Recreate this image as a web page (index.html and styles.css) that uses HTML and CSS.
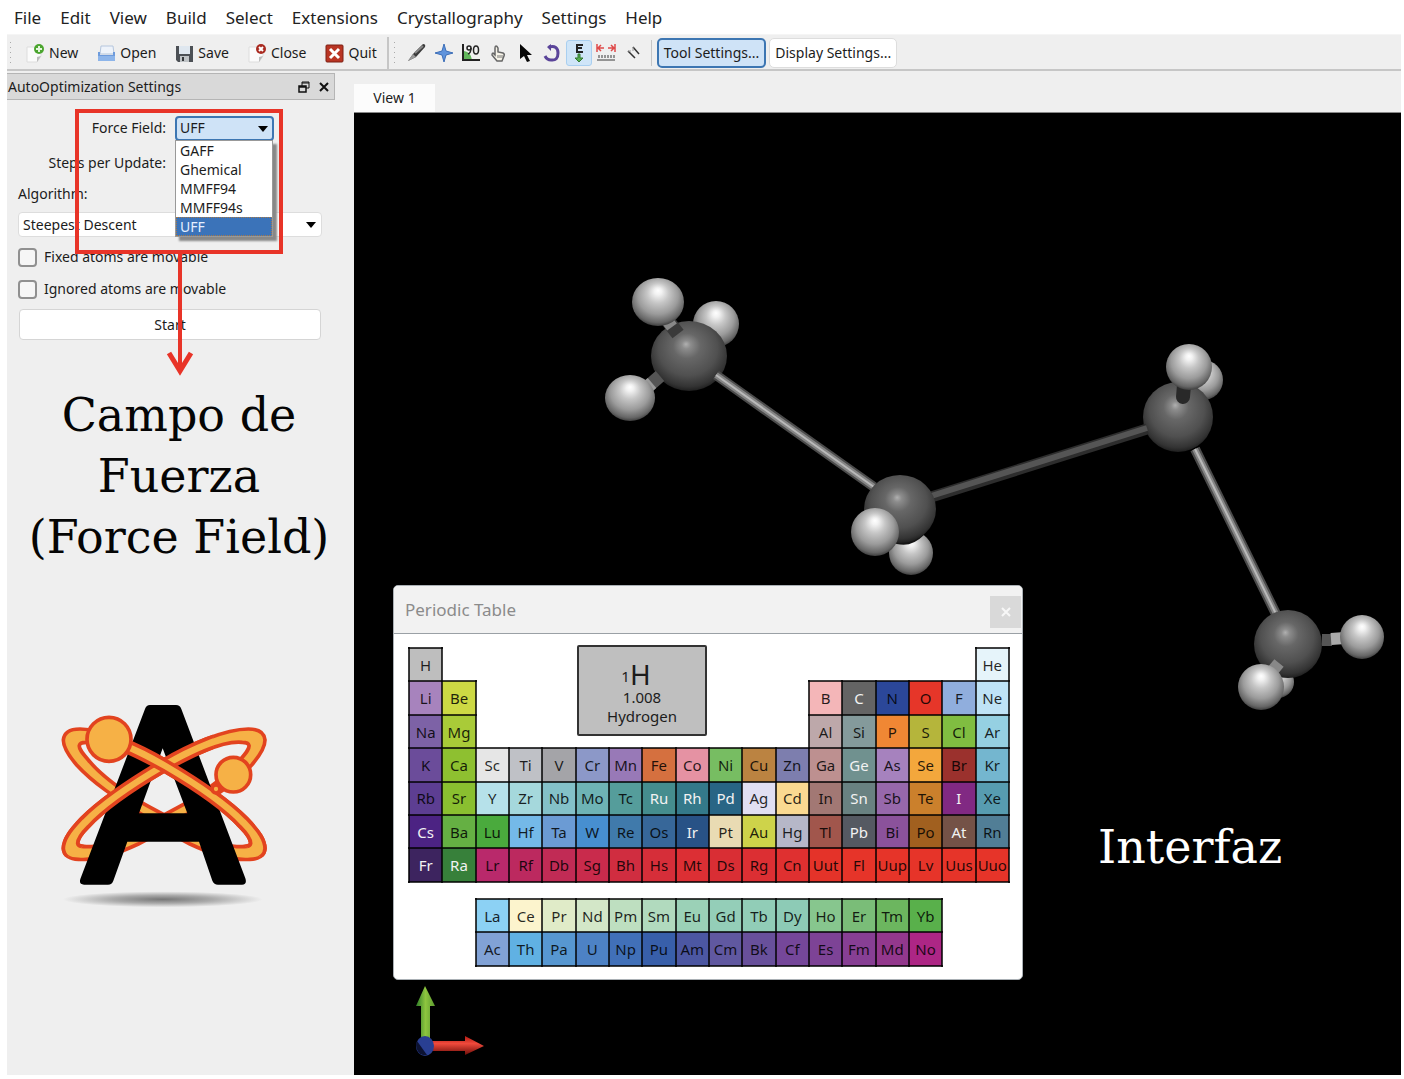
FILE: index.html
```html
<!DOCTYPE html>
<html lang="en">
<head>
<meta charset="utf-8">
<title>Avogadro</title>
<link rel="stylesheet" href="styles.css">
</head>
<body>
<div class="app">
  <nav class="menubar">
    <a href="#">File</a><a href="#">Edit</a><a href="#">View</a><a href="#">Build</a><a href="#">Select</a><a href="#">Extensions</a><a href="#">Crystallography</a><a href="#">Settings</a><a href="#">Help</a>
  </nav>

  <div class="toolbar">
    <span class="grip"></span>
    <div class="files">
      <button class="tool"><svg width="19" height="19" viewBox="0 0 19 19"><path d="M1 3h14v9l-4 6H1z" fill="#fbfbfb" stroke="#ddd"/><path d="M15 12l-4 6v-5z" fill="#bbb"/><circle cx="13" cy="5" r="5" fill="#4ba52f"/><path d="M13 2v6M10 5h6" stroke="#e4f6dc" stroke-width="2"/></svg>New</button>
      <button class="tool"><svg width="19" height="19" viewBox="0 0 19 19"><path d="M4 2h12l1 8H3z" fill="#eef3fa" stroke="#b5c6dd"/><path d="M1 8h2v3h13V8h2v8q0 1-1 1H2q-1 0-1-1z" fill="#6d9bdc"/><path d="M1 12h17v4q0 1-1 1H2q-1 0-1-1z" fill="#8db5ea"/></svg>Open</button>
      <button class="tool"><svg width="19" height="19" viewBox="0 0 19 19"><path d="M1 2h17v16H3l-2-2z" fill="#4c5055"/><path d="M4 2h11v8H4z" fill="#dfe7ef"/><path d="M5 12h9v6H5z" fill="#bfc3c6"/><path d="M7 13h2v4H7z" fill="#35383b"/></svg>Save</button>
      <button class="tool"><svg width="19" height="19" viewBox="0 0 19 19"><path d="M1 3h14v9l-4 6H1z" fill="#fbfbfb" stroke="#ddd"/><path d="M15 12l-4 6v-5z" fill="#bbb"/><circle cx="13" cy="5" r="5" fill="#a92a20"/><path d="M11 3l4 4m0-4l-4 4" stroke="#fff" stroke-width="2"/></svg>Close</button>
      <button class="tool"><svg width="19" height="19" viewBox="0 0 19 19"><rect x="1" y="1" width="17" height="17" rx="1" fill="#b93523" stroke="#7d2115"/><path d="M5 5l9 9m0-9l-9 9" stroke="#fff" stroke-width="3"/></svg>Quit</button>
    </div>
    <span class="rule"></span>
    <span class="grip"></span>
    <div class="modes">
      <button class="mode" aria-label="Draw"><svg width="20" height="20" viewBox="0 0 20 20"><path d="M1 18l5-7L16 1q3 0 2 3L9 14z" fill="#3b3b3b"/><path d="M1 18l5-7 3 3z" fill="#999"/><path d="M8 10l8-7" stroke="#888" stroke-width="2"/></svg></button>
      <button class="mode" aria-label="Navigate"><svg width="20" height="20" viewBox="0 0 20 20"><path d="M10 1l2 7 7 2-7 2-2 7-2-7-7-2 7-2z" fill="#5f93dc" stroke="#3c6eb8"/></svg></button>
      <button class="mode" aria-label="Bond centric"><svg width="20" height="20" viewBox="0 0 20 20"><path d="M3 17V8q7 1 8 9z" fill="#62b75b"/><path d="M2 1v16h17" fill="none" stroke="#222" stroke-width="2"/><g fill="none" stroke="#222" stroke-width="1.5"><circle cx="8" cy="5" r="2"/><path d="M10 5q0 5-3 6"/><ellipse cx="15" cy="7" rx="2.500" ry="4"/></g></svg></button>
      <button class="mode" aria-label="Manipulate"><svg width="20" height="20" viewBox="0 0 20 20"><path d="M7 12V5q0-2 1-2t2 2v4l5 1q2 1 1 3l-2 5H9l-5-6q0-2 1-2z" fill="#f6f3e8" stroke="#666" stroke-width="1.500"/><path d="M10 12v3m2-3v3m2-3v3" stroke="#777"/></svg></button>
      <button class="mode" aria-label="Select"><svg width="20" height="20" viewBox="0 0 20 20"><path d="M5 1v15l4-3 3 6 3-1-3-6h5z" fill="#050505"/></svg></button>
      <button class="mode" aria-label="Auto rotate"><svg width="20" height="20" viewBox="0 0 20 20"><path d="M7 4q9-2 9 6t-7 7q-4 0-6-4" fill="none" stroke="#5a4499" stroke-width="3"/><path d="M9 1v7L5 4z" fill="#5a4499"/></svg></button>
      <button class="mode mode-on" aria-label="Auto optimize"><svg width="20" height="20" viewBox="0 0 20 20"><path d="M14 2H8v7h6M8 5h5" fill="none" stroke="#222" stroke-width="2"/><path d="M9 11h2v4h3l-4 4-4-4h3z" fill="#55ad50" stroke="#32782e"/></svg></button>
      <button class="mode" aria-label="Measure"><svg width="20" height="20" viewBox="0 0 20 20"><path d="M1 1v8M19 1v8M2 5h6m4 0h6M5 2L2 5l3 3M15 2l3 3-3 3" fill="none" stroke="#df4a4a" stroke-width="1.500"/><path d="M1 17h18M3 12v3m3-3v3m3-3v3m3-3v3m3-3v3m3-3v3" stroke="#777" stroke-width="1.500"/></svg></button>
      <button class="mode" aria-label="Align"><svg width="20" height="20" viewBox="0 0 20 20"><path d="M5 8l7 7M10 4l6 7" stroke="#333" stroke-width="1.500"/><path d="M5 8h3M10 4v4" stroke="#999"/></svg></button>
    </div>
    <span class="rule rule-soft"></span>
    <button class="push push-on">Tool Settings...</button>
    <button class="push">Display Settings...</button>
  </div>

  <main class="work">
    <aside class="dock">
      <header class="dock-head">
        <span>AutoOptimization Settings</span>
        <button aria-label="Float"><svg width="12" height="12" viewBox="0 0 12 12" fill="none" stroke="#111"><path d="M4 5V1h7v6H8M4 2h7"/><path d="M1 5h7v6H1zM1 6h7" stroke-width="1.500"/></svg></button>
        <button aria-label="Close panel"><svg width="12" height="12" viewBox="0 0 12 12"><path d="M2 2l8 8m0-8l-8 8" stroke="#111" stroke-width="2"/></svg></button>
      </header>

      <form class="form">
        <div class="row row-pair">
          <label for="field">Force Field:</label>
          <div class="combo combo-short">
            <select id="field" class="select-on"><option>UFF</option></select>
            <svg class="caret" width="10" height="6" viewBox="0 0 10 6"><path d="M0 0h10L5 6z"/></svg>
            <ul class="popup">
              <li>GAFF</li><li>Ghemical</li><li>MMFF94</li><li>MMFF94s</li><li class="picked">UFF</li>
            </ul>
          </div>
        </div>
        <div class="row row-pair"><label for="steps">Steps per Update:</label><input id="steps" class="steps" type="text"></div>
        <label class="algo" for="algo">Algorithm:</label>
        <div class="combo">
          <select id="algo"><option>Steepest Descent</option></select>
          <svg class="caret" width="10" height="6" viewBox="0 0 10 6"><path d="M0 0h10L5 6z"/></svg>
        </div>
        <label class="row check"><input type="checkbox">Fixed atoms are movable</label>
        <label class="row check"><input type="checkbox">Ignored atoms are movable</label>
        <button class="start" type="button">Start</button>
      </form>

      <p class="caption">Campo de<br>Fuerza<br>(Force Field)</p>

      <svg class="logo" width="250" height="230" viewBox="0 0 750 690">
        <defs>
          <radialGradient id="floor"><stop offset="0" stop-color="#777"/><stop offset=".5" stop-color="#aaa"/><stop offset="1" stop-color="#efefef"/></radialGradient>
          <path id="orbit" fill-rule="evenodd" d="M120 117C190 117 300 165 380 213C460 260 560 325 620 385C660 427 674 450 675 475C674 497 655 508 630 508C580 512 520 495 450 462C390 432 340 395 290 363C230 325 160 280 110 225C80 190 70 165 70 150C72 128 90 117 120 117ZM138 157C200 150 300 203 370 242C440 283 540 345 600 410C620 430 632 450 632 460C630 472 610 470 590 470C540 465 470 425 420 400C380 378 340 358 305 338C260 310 190 265 145 210C125 187 116 175 118 166C120 158 128 157 138 157Z"/>
          <clipPath id="front"><path d="M225 100H750V520L660 500L225 190Z"/></clipPath>
        </defs>
        <ellipse cx="368" cy="628" rx="300" ry="24" fill="url(#floor)"/>
        <g fill="#f6b146" stroke="#e2431f" stroke-width="11">
          <use href="#orbit" transform="matrix(-1 0 0 1 745 0)"/>
          <use href="#orbit"/>
        </g>
        <path fill="#000" fill-rule="evenodd" d="M330 45H408Q420 45 424 57L616 565Q622 583 606 584H534Q522 584 517 572L477 455H262L220 572Q216 584 204 584H132Q116 583 121 567L315 57Q319 45 330 45ZM368 175L297 370H442Z"/>
        <g fill="#f6b146" stroke="#e2431f" stroke-width="11">
          <g transform="matrix(-1 0 0 1 745 0)"><use href="#orbit" clip-path="url(#front)"/></g>
          <use href="#orbit" clip-path="url(#front)"/>
          <circle cx="528" cy="297" r="12"/>
          <circle cx="207" cy="148" r="66"/>
          <circle cx="580" cy="254" r="52"/>
        </g>
      </svg>

      <svg class="callout" width="212" height="272" viewBox="0 0 212 272" fill="none" stroke="#e83428" stroke-width="4">
        <path d="M4 4H208V145H4zM107 145V264"/><path d="M96 246L107 264L118 246" stroke-width="5"/>
      </svg>
    </aside>

    <section class="stage">
      <div class="tabs"><button class="tab">View 1</button></div>
      <div class="view">
        <svg class="scene" viewBox="354 113 1047 962">
          <defs>
            <radialGradient id="h" cx=".5" cy=".42" r=".6" fx=".5" fy=".26"><stop offset="0" stop-color="#fff"/><stop offset=".12" stop-color="#f2f2f2"/><stop offset=".35" stop-color="#c6c6c6"/><stop offset=".65" stop-color="#9b9b9b"/><stop offset=".88" stop-color="#666"/><stop offset="1" stop-color="#333"/></radialGradient>
            <radialGradient id="c" cx=".5" cy=".42" r=".6" fx=".46" fy=".33"><stop offset="0" stop-color="#b0b0b0"/><stop offset=".1" stop-color="#8c8c8c"/><stop offset=".3" stop-color="#676767"/><stop offset=".65" stop-color="#505050"/><stop offset=".88" stop-color="#333"/><stop offset="1" stop-color="#181818"/></radialGradient>
            <linearGradient id="red" x1="0" y1="0" x2="0" y2="1"><stop offset="0" stop-color="#b01912"/><stop offset=".4" stop-color="#f04a3c"/><stop offset="1" stop-color="#6d0d08"/></linearGradient>
            <linearGradient id="green"><stop offset="0" stop-color="#2d7c28"/><stop offset=".5" stop-color="#8ec63f"/><stop offset="1" stop-color="#5c9a2f"/></linearGradient>
          </defs>
          <circle cx="716" cy="324" r="23" fill="url(#h)"/>
          <ellipse cx="689" cy="356" rx="38" ry="35" fill="url(#c)"/>
          <path d="M668 321L678 334" stroke="#3a3a3a" stroke-width="14"/><path d="M666 319L672 327" stroke="#888" stroke-width="12"/>
          <path d="M644 390L660 376" stroke="#555" stroke-width="13"/><path d="M644 390L652 383" stroke="#999" stroke-width="13"/>
          <ellipse cx="658" cy="302" rx="26" ry="24" fill="url(#h)"/><ellipse cx="630" cy="398" rx="25" ry="23" fill="url(#h)"/>
          <circle cx="1203" cy="380" r="20" fill="url(#h)"/><circle cx="1178" cy="417" r="35" fill="url(#c)"/>
          <path d="M1184 385L1183 397" stroke="#292929" stroke-width="14" stroke-linecap="round"/><circle cx="1189" cy="367" r="23" fill="url(#h)"/>
          <path d="M716 375L874 487M1195 449L1276 614" stroke="#4b4b4b" stroke-width="10"/><path d="M928 498L1147 429" stroke="#2d2d2d" stroke-width="11"/>
          <path d="M716 375L874 487M1195 449L1276 614" stroke="#858585" stroke-width="6"/><path d="M928 497L1147 428" stroke="#555" stroke-width="6"/>
          <path d="M716 375L874 487M1195 449L1276 614" stroke="#b9b9b9" stroke-width="2"/>
          <circle cx="911" cy="553" r="22" fill="url(#h)"/><path d="M890 541Q908 551 924 535L920 520H890z" fill="#151515"/>
          <ellipse cx="900" cy="509" rx="36" ry="34" fill="url(#c)"/><circle cx="875" cy="532" r="24" fill="url(#h)"/>
          <circle cx="1278" cy="682" r="16" fill="url(#h)"/><circle cx="1288" cy="644" r="34" fill="url(#c)"/>
          <path d="M1322 640H1332" stroke="#555" stroke-width="12"/><path d="M1331 639L1345 638" stroke="#aaa" stroke-width="12"/>
          <path d="M1279 663L1270 674" stroke="#888" stroke-width="12"/>
          <circle cx="1362" cy="637" r="22" fill="url(#h)"/><circle cx="1261" cy="687" r="23" fill="url(#h)"/>
          <path d="M421 1040V1006H416L425 986L435 1006H430V1040z" fill="url(#green)"/>
          <path d="M432 1041H465V1036L484 1046L465 1055V1051H432z" fill="url(#red)"/>
          <ellipse cx="425" cy="1046" rx="9" ry="10" fill="#293f92"/><path d="M417 1041L427 1055A9 10 0 0 1 417 1041z" fill="#0c1231"/>
        </svg>
        <p class="note">Interfaz</p>
        <section class="dialog">
          <header class="dialog-head"><h2>Periodic Table</h2><button aria-label="Close window"><svg width="10" height="10" viewBox="0 0 10 10"><path d="M1 1l8 8m0-8L1 9" stroke="#f7f7f7" stroke-width="2"/></svg></button></header>
          <div class="dialog-body">
            <table class="elements"><tbody id="elements"></tbody></table>
            <div class="card"><div class="card-symbol"><small>1</small>H</div><div>1.008</div><div>Hydrogen</div></div>
          </div>
        </section>
      </div>
    </section>
  </main>
</div>
<script src="elements.js"></script>
</body>
</html>
```

FILE: styles.css
```css
* { box-sizing: border-box; }
body { margin: 0; background: #fff; color: #1c1c1c; font: 14px/20px "Noto Sans", "Open Sans", sans-serif; }
button, input, select { font: inherit; color: inherit; }
button { border: 0; background: none; padding: 0; }
svg { display: block; flex: none; }
p, h2, ul { margin: 0; padding: 0; }

.app { display: flex; flex-direction: column; min-height: 100vh; padding: 0 3px 4px 7px; }

.menubar { display: flex; gap: 19px; align-items: center; height: 34px; padding: 2px 7px 0; font-size: 17px; line-height: 24px; }
.menubar a { color: #222; text-decoration: none; }

.toolbar { display: flex; align-items: center; height: 37px; padding-top: 2px; background: #efefef; border-top: 1px solid #f5f5f5; border-bottom: 2px solid #c6c6c6; }
.grip { width: 3px; height: 26px; margin-left: 2px; background: radial-gradient(circle, #aaa 1px, transparent 1px) 0 0 / 3px 5px; }
.files { display: flex; gap: 19px; margin: 0 10px 0 14px; }
.tool { display: flex; gap: 4px; align-items: center; }
.rule { width: 2px; height: 33px; background: #c6c6c6; margin-right: 2px; }
.rule-soft { width: 1px; height: 26px; margin: 0 5px; }
.modes { display: flex; gap: 1px; margin-left: 8px; }
.mode { display: grid; place-items: center; width: 26px; height: 26px; border: 1px solid transparent; border-radius: 3px; }
.mode-on { background: #cfe5f8; border-color: #a9cff0; }
.push { height: 30px; margin-right: 3px; padding: 0 5px; background: #fff; border: 1px solid #ddd; border-radius: 5px; white-space: nowrap; }
.push-on { background: #cfe3f7; border: 2px solid #3d76b2; }

.work { display: grid; grid-template-columns: 328px minmax(0, 1fr); gap: 19px; flex: 1; background: #efefef; }
.dock { position: relative; padding-top: 2px; }
.dock-head { display: flex; align-items: center; gap: 8px; height: 27px; padding: 0 4px 0 1px; background: #d9d9d9; border: 1px solid #b5b5b5; border-left: 0; }
.dock-head span { flex: 1; }

.form { display: flex; flex-direction: column; gap: 8px; padding: 14px 13px 0 11px; }
.row { display: flex; align-items: center; height: 26px; }
.row-pair { display: grid; grid-template-columns: 148px 1fr; column-gap: 9px; }
.row-pair:first-child { height: 28px; }
.row-pair label { text-align: right; }
.steps { width: 90px; height: 24px; border: 1px solid #ddd; border-radius: 4px; }
.algo { height: 20px; }
.combo { position: relative; }
.combo-short { width: 99px; }
.combo select { display: block; width: 100%; height: 25px; padding: 0 4px; appearance: none; background: #fff; border: 1px solid #ddd; border-radius: 4px; }
.combo .select-on { background: #cfe3f7; border: 2px solid #3d76b2; padding: 0 3px; }
.caret { position: absolute; right: 6px; top: 10px; pointer-events: none; }
.popup { position: absolute; z-index: 1; top: 24px; left: 0; width: 98px; background: #fff; border: 1px solid #999; box-shadow: 4px 4px 2px #888; list-style: none; }
.popup li { height: 19px; padding-left: 4px; line-height: 19px; }
.popup .picked { background: #3b73b9; color: #e4efff; outline: 1px dotted #a67a4a; outline-offset: -1px; }
.check { gap: 7px; height: 24px; }
.check input { appearance: none; width: 19px; height: 19px; margin: 0; border: 2px solid #909090; border-radius: 4px; background: #f6f6f6; }
.start { height: 31px; margin: 0 1px; background: #fff; border: 1px solid #d5d5d5; border-radius: 4px; }

.caption { margin: 45px 0 0 16px; font: 46px/61px "DejaVu Serif", serif; text-align: center; color: #050505; white-space: nowrap; }
.logo { margin: 122px 0 0 33px; }
.callout { position: absolute; z-index: 2; left: 66px; top: 36px; pointer-events: none; }

.stage { display: flex; flex-direction: column; }
.tabs { display: flex; align-items: flex-end; height: 42px; border-bottom: 1px solid #888; }
.tab { width: 81px; height: 28px; background: #fcfcfc; }
.view { position: relative; flex: 1; background: #000; overflow: hidden; }
.scene { width: 100%; height: 100%; }
.note { position: absolute; left: 744px; top: 706px; color: #fff; font: 46px/56px "DejaVu Serif", serif; }

.dialog { position: absolute; left: 39px; top: 472px; width: 630px; background: #fff; border: 1px solid #aab0b5; border-radius: 5px; overflow: hidden; }
.dialog-head { display: flex; justify-content: space-between; align-items: center; height: 48px; padding: 0 1px 0 11px; background: #f2f2f2; border-bottom: 1px solid #9aa0a5; }
.dialog-head h2 { color: #8b8b8b; font-size: 17px; line-height: 24px; font-weight: 400; }
.dialog-head button { display: grid; place-items: center; width: 31px; height: 32px; margin-top: 4px; background: #d9d9d9; }
.dialog-body { position: relative; padding: 13px 12px 12px 14px; }
.elements { width: 100%; height: 320px; table-layout: fixed; border-collapse: collapse; }
.elements td { height: 33px; padding: 0; text-align: center; font-size: 15px; line-height: 20px; color: rgba(0, 0, 0, .85); }
.elements .el { border: 2px solid rgba(0, 0, 0, .75); }
.elements .light { color: #f2f2f2; }
.elements .gap td { height: 17px; }
.card { position: absolute; left: 183px; top: 11px; width: 130px; height: 91px; padding-top: 13px; background: #bfbfbf; border: 2px solid #333; border-radius: 2px; text-align: center; font-size: 15px; line-height: 19px; }
.card-symbol { height: 28px; font-size: 28px; line-height: 28px; padding-right: 12px; }
.card-symbol small { font-size: 15px; line-height: 15px; vertical-align: 3px; }
```

FILE: elements.js
```js
// One string per table row: "symbol colour", "*" marks light lettering, a number skips that many cells.
const rows = [
  "H bebebe,16,He e6f4fa",
  "Li a783bd,Be cdd944,10,B f4b6b8,C* 646464,N 2b4799,O e63629,F 90aedd,Ne bfe3f6",
  "Na 7d62a6,Mg a9cb38,10,Al bda8aa,Si 849a9b,P f08734,S b5b53b,Cl 80bd41,Ar 95d0e2",
  "K 6b4c9a,Ca 8ec030,Sc e6e6e6,Ti bfc1c6,V a4a4a8,Cr 8c98c8,Mn 9879b7,Fe d5703f,Co e592a3,Ni 77bd62,Cu bb8341,Zn 7d7eae,Ga bd9090,Ge* 70918f,As a682be,Se f3a73c,Br 9b312d,Kr 74b6cf",
  "Rb 5d3e92,Sr 8abf30,Y b6e1ea,Zr a5d8dc,Nb 84c1c8,Mo 6eb3b5,Tc 559d9b,Ru* 458d8e,Rh* 34798a,Pd* 286585,Ag e1dff2,Cd fad991,In a27874,Sn* 698181,Sb 9768ab,Te cb802c,I* 812983,Xe 579cb0",
  "Cs* 4c2383,Ba 65b043,Lu 4aaa3d,Hf 74b9e8,Ta 6b9bd4,W 478fd0,Re 407aab,Os 376799,Ir* 285286,Pt e9dbb3,Au ced34a,Hg b6b7c8,Tl a1564c,Pb* 555962,Bi 8b529b,Po a1601f,At* 745247,Rn 517e96",
  "Fr* 3d245f,Ra* 37803a,Lr b9296b,Rf bc295f,Db c12b55,Sg c92b4c,Bh d02d40,Hs d62e39,Mt dc2f34,Ds d92e34,Rg dc2f33,Cn df3030,Uut e43329,Fl e63429,Uup e63429,Lv e63429,Uus e63429,Uuo e63429",
  "",
  "2,La 8cd1f4,Ce fcf4cd,Pr e0ebc8,Nd d3e7c8,Pm bedfc0,Sm b1dabe,Eu 9bd1b7,Gd 94ceb8,Tb 91cdb7,Dy 8dcbb6,Ho 87c68e,Er 7abd78,Tm 6cb65f,Yb 59b04b,2",
  "2,Ac 81a2d6,Th 60b1e3,Pa 5797d1,U 4d82c5,Np 4170b8,Pu 385faa,Am 4c57a2,Cm 6058a0,Bk 68509b,Cf 75479a,Es 7d4396,Fm 873f94,Md 93388d,No ad2685,2"
];
const body = document.getElementById("elements");
for (const row of rows) {
  const tr = body.insertRow();
  if (!row) {
    tr.className = "gap";
    tr.insertCell().colSpan = 18;
    continue;
  }
  for (const item of row.split(",")) {
    const td = tr.insertCell();
    if (/^\d+$/.test(item)) {
      td.colSpan = Number(item);
      continue;
    }
    const [name, colour] = item.split(" ");
    td.className = name.endsWith("*") ? "el light" : "el";
    td.textContent = name.replace("*", "");
    td.style.backgroundColor = "#" + colour;
  }
}
```
